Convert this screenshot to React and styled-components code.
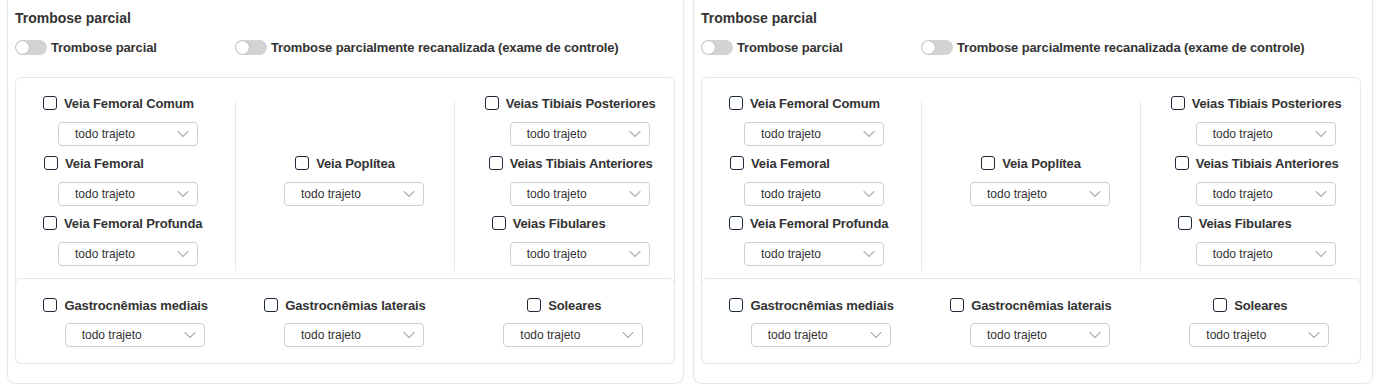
import styled, { createGlobalStyle } from 'styled-components';
import { ChevronDown } from 'lucide-react';

const GlobalStyle = createGlobalStyle`
  body {
    margin: 0;
    background: #fff;
    font-family: "Liberation Sans", Arial, sans-serif;
    color: #333;
  }
`;

const Page = styled.div`
  display: grid;
  grid-template-columns: 677px 680px;
  column-gap: 9px;
  padding: 0 7px;
`;

const Card = styled.section`
  border: 1px solid #e3e7ee;
  border-top: none;
  border-radius: 0 0 9px 9px;
  box-shadow: 0 1px 3px rgba(40, 60, 100, 0.06);
  padding: 10px 8px 19px 7px;
`;

const Title = styled.h3`
  margin: 0;
  font-size: 14px;
  line-height: 17px;
  font-weight: 700;
  color: #333;
`;

const ToggleRow = styled.div`
  display: flex;
  margin-top: 12px;
  margin-bottom: 22px;
`;

const ToggleItem = styled.label`
  display: flex;
  align-items: center;
  gap: 4px;
  min-width: 220px;
  height: 16px;
  font-size: 13px;
  font-weight: 700;
  letter-spacing: -0.12px;
  color: #333;
`;

const Track = styled.span`
  display: flex;
  align-items: center;
  width: 32px;
  height: 15px;
  padding: 0 1px;
  box-sizing: border-box;
  border-radius: 8px;
  background: #d3d3d3;
`;

const Knob = styled.span`
  width: 13px;
  height: 13px;
  border-radius: 50%;
  background: #fff;
  box-shadow: 0 0 0 0.5px rgba(0, 0, 0, 0.15);
`;

const InnerBox = styled.div`
  border: 1px solid #e6e8ec;
  border-radius: 6px;
  width: 660px;
  box-sizing: border-box;
`;

const TopSection = styled.div`
  display: grid;
  grid-template-columns: 1fr 1fr 1fr;
  padding: 17px 0 7px;
`;

const SideColumn = styled.div`
  display: flex;
  flex-direction: column;
  gap: 9px;
  padding-bottom: 5px;
`;

const MiddleColumn = styled.div`
  display: flex;
  flex-direction: column;
  justify-content: center;
  align-items: center;
  margin-top: 7px;
  padding-bottom: 12px;
  border-left: 1px solid #e6e8ec;
  border-right: 1px solid #e6e8ec;
`;

const Item = styled.div`
  display: flex;
  flex-direction: column;
  align-items: ${p => (p.$center ? 'center' : 'flex-start')};
`;

const CheckLabel = styled.label`
  display: flex;
  align-items: center;
  gap: 7px;
  height: 16px;
  margin-left: ${p => p.$left || 0}px;
  margin-bottom: ${p => p.$gap || 11}px;
  font-size: 13px;
  font-weight: 700;
  letter-spacing: -0.12px;
  color: #333;
  white-space: nowrap;
`;

const Box = styled.input.attrs({ type: 'checkbox' })`
  appearance: none;
  margin: 0;
  width: 14px;
  height: 14px;
  border: 1px solid #1d2838;
  border-radius: 3px;
  background: #fff;
  flex: none;
`;

const Select = styled.div`
  display: flex;
  align-items: center;
  justify-content: space-between;
  box-sizing: border-box;
  width: 140px;
  height: 24px;
  margin-left: ${p => p.$left || 0}px;
  padding: 0 4px 0 16px;
  border: 1px solid #cfcfcf;
  border-radius: 4px;
  background: #fff;
  font-size: 12px;
  color: #333;
`;

const BottomSection = styled.div`
  display: grid;
  grid-template-columns: 1fr 1fr 1fr;
  margin: 0 -1px -1px;
  padding: 18px 0 16px;
  border: 1px solid #e6e8ec;
  border-radius: 6px;
`;

function Dropdown({ left }) {
  return (
    <Select $left={left}>
      <span>todo trajeto</span>
      <ChevronDown size={20} strokeWidth={1.4} color="#b3b3b3" />
    </Select>
  );
}

function Field({ label, left, selectLeft, center, gap }) {
  return (
    <Item $center={center}>
      <CheckLabel $left={left} $gap={gap}>
        <Box />
        {label}
      </CheckLabel>
      <Dropdown left={selectLeft} />
    </Item>
  );
}

function Panel({ toggles }) {
  return (
    <Card>
      <Title>Trombose parcial</Title>
      <ToggleRow>
        {toggles.map(t => (
          <ToggleItem key={t}>
            <Track><Knob /></Track>
            {t}
          </ToggleItem>
        ))}
      </ToggleRow>
      <InnerBox>
        <TopSection>
          <SideColumn>
            <Field label="Veia Femoral Comum" left={27} selectLeft={42} />
            <Field label="Veia Femoral" left={28} selectLeft={42} />
            <Field label="Veia Femoral Profunda" left={27} selectLeft={42} />
          </SideColumn>
          <MiddleColumn>
            <Field label="Veia Poplítea" center selectLeft={18} />
          </MiddleColumn>
          <SideColumn>
            <Field label="Veias Tibiais Posteriores" left={30} selectLeft={55} />
            <Field label="Veias Tibiais Anteriores" left={34} selectLeft={55} />
            <Field label="Veias Fibulares" left={37} selectLeft={55} />
          </SideColumn>
        </TopSection>
        <BottomSection>
          <Field label="Gastrocnêmias mediais" center selectLeft={18} gap={10} />
          <Field label="Gastrocnêmias laterais" center selectLeft={18} gap={10} />
          <Field label="Soleares" center selectLeft={18} gap={10} />
        </BottomSection>
      </InnerBox>
    </Card>
  );
}

const toggles = ['Trombose parcial', 'Trombose parcialmente recanalizada (exame de controle)'];

export default function App() {
  return (
    <>
      <GlobalStyle />
      <Page>
        <Panel toggles={toggles} />
        <Panel toggles={toggles} />
      </Page>
    </>
  );
}
